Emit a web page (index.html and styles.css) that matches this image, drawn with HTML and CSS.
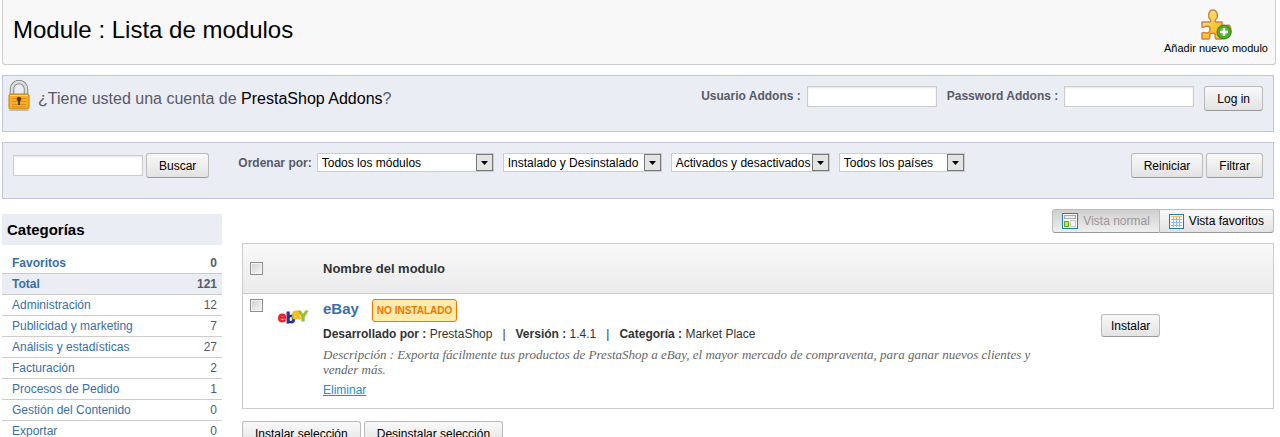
FILE: index.html
```html
<!DOCTYPE html>
<html lang="es">
<head>
    <meta charset="UTF-8">
    <meta name="viewport" content="width=device-width, initial-scale=1.0">
    <title>Module : Lista de modulos</title>
    <link rel="stylesheet" href="styles.css">
</head>
<body>

    <header class="toolbar">
        <h1>Module : Lista de modulos</h1>
        <a class="add-module" href="#">
            <svg width="34" height="32" viewBox="0 0 34 32">
                <defs>
                    <linearGradient id="gold" x1="0" y1="0" x2="1" y2="1">
                        <stop offset="0" stop-color="#fff0a0"/>
                        <stop offset=".5" stop-color="#fcc533"/>
                        <stop offset="1" stop-color="#f5a51c"/>
                    </linearGradient>
                    <radialGradient id="green">
                        <stop offset="0" stop-color="#6dc93f"/>
                        <stop offset="1" stop-color="#42a31c"/>
                    </radialGradient>
                </defs>
                <path d="M3 14h8c2-1 0-3-1-4-1-3 0-8 4-8s5 5 4 8c-1 1-3 3-1 4h6v7c1 2 3-4 6-4s3 4 3 7-3 6-5 4c-2-1-4-2-4 0v3h-6c-2-2 0-3-1-5-1-1-4-1-5 0s1 3-1 5H3v-6c2-1 3 0 5 0s3-2 3-4-1-3-3-3-3 2-5 1z" fill="url(#gold)" stroke="#cf8440" stroke-width="1.5" stroke-linejoin="round"/>
                <circle cx="25" cy="24" r="7" fill="url(#green)" stroke="#2f8416"/>
                <path d="M25 20v8M21 24h8" stroke="#fff" stroke-width="2.5"/>
            </svg>
            <span>Añadir nuevo modulo</span>
        </a>
    </header>

    <!-- Addons login -->
    <form class="panel addons">
        <svg class="lock" width="22" height="32" viewBox="0 0 22 32">
            <path d="M4 15V9a7 7 0 0 1 14 0v6" fill="none" stroke="#85878a" stroke-width="4.5"/>
            <path d="M4 15V9a7 7 0 0 1 14 0v6" fill="none" stroke="#dcdddf" stroke-width="2.5"/>
            <rect x="1" y="14" width="20" height="15" rx="1.5" fill="#f8ae24" stroke="#bd7c14"/>
            <path d="M2.500 15.500h17" stroke="#ffdf80"/>
            <path d="M4 18.500h14M4 21.500h14M4 24.500h14M4 27h14" stroke="#da8d15"/>
            <circle cx="11" cy="19" r="2.300" fill="#5d3709"/>
            <path d="M11 19v6" stroke="#5d3709" stroke-width="2"/>
            <path d="M1 30.500h20" stroke="#b9bac4"/>
        </svg>
        <p class="question">¿Tiene usted una cuenta de <a href="#">PrestaShop Addons</a>?</p>
        <label for="addons-user">Usuario Addons :</label>
        <input class="field" type="text" id="addons-user">
        <label for="addons-pass">Password Addons :</label>
        <input class="field" type="password" id="addons-pass">
        <button class="button" type="button">Log in</button>
    </form>

    <!-- Search and filters -->
    <form class="panel filters">
        <input class="field" type="text" aria-label="Buscar">
        <button class="button" type="button">Buscar</button>
        <div class="sort">
            <label for="sort-type">Ordenar por:</label>
            <select class="sort-type" id="sort-type"><option>Todos los módulos</option></select>
            <select class="sort-state" aria-label="Instalación"><option>Instalado y Desinstalado</option></select>
            <select class="sort-state" aria-label="Activación"><option>Activados y desactivados</option></select>
            <select class="sort-country" aria-label="País"><option>Todos los países</option></select>
        </div>
        <button class="button" type="reset">Reiniciar</button>
        <button class="button" type="button">Filtrar</button>
    </form>

    <div class="content">
        <aside class="sidebar">
            <h2>Categorías</h2>
            <ul class="categories">
                <li class="strong"><a href="#">Favoritos</a><span>0</span></li>
                <li class="strong selected"><a href="#">Total</a><span>121</span></li>
                <li><a href="#">Administración</a><span>12</span></li>
                <li><a href="#">Publicidad y marketing</a><span>7</span></li>
                <li><a href="#">Análisis y estadísticas</a><span>27</span></li>
                <li><a href="#">Facturación</a><span>2</span></li>
                <li><a href="#">Procesos de Pedido</a><span>1</span></li>
                <li><a href="#">Gestión del Contenido</a><span>0</span></li>
                <li><a href="#">Exportar</a><span>0</span></li>
            </ul>
        </aside>

        <main class="modules">
            <div class="views">
                <button class="view" type="button" disabled>
                    <svg width="16" height="16" viewBox="0 0 16 16">
                        <rect x=".5" y=".5" width="15" height="15" fill="#fff" stroke="#1c7cb5"/>
                        <rect x="2.500" y="2.500" width="11" height="3" fill="#eee" stroke="#aaa"/>
                        <rect x="2.500" y="8.500" width="4" height="5" fill="#b9e86c" stroke="#62a813"/>
                        <rect x="8.500" y="7.500" width="5" height="6" fill="#f4f4f4" stroke="#c6c6c6"/>
                    </svg>
                    Vista normal
                </button>
                <button class="view" type="button">
                    <svg width="15" height="15" viewBox="0 0 15 15">
                        <rect x=".5" y=".5" width="14" height="14" fill="#fff" stroke="#1c7cb5"/>
                        <path d="M4.500 2v11M7.500 2v11M10.500 2v11M2 5.500h11M2 8.500h11M2 11.500h11" stroke="#8fbbe4"/>
                        <path d="M2 2.500h11" stroke="#f6c34f"/>
                    </svg>
                    Vista favoritos
                </button>
            </div>

            <table class="module-table">
                <thead>
                    <tr>
                        <th class="check"><input type="checkbox" aria-label="Seleccionar todos"></th>
                        <th class="logo"></th>
                        <th>Nombre del modulo</th>
                        <th class="actions"></th>
                    </tr>
                </thead>
                <tbody>
                    <tr>
                        <td class="check"><input type="checkbox" aria-label="eBay"></td>
                        <td class="logo">
                            <svg width="32" height="32" viewBox="0 0 32 32">
                                <text y="23"><tspan x="0" fill="#e6202c" stroke="#e6202c">e</tspan><tspan x="8" dy="1" fill="#20309a" stroke="#20309a">b</tspan><tspan x="14" dy="-4" fill="#f8b91c" stroke="#f8b91c">a</tspan><tspan x="20" dy="2" fill="#98c21f" stroke="#98c21f">Y</tspan></text>
                            </svg>
                        </td>
                        <td class="details">
                            <div class="title"><h3>eBay</h3><span class="badge">NO INSTALADO</span></div>
                            <p class="meta">
                                <span><b>Desarrollado por :</b> PrestaShop</span>
                                <span>|</span>
                                <span><b>Versión :</b> 1.4.1</span>
                                <span>|</span>
                                <span><b>Categoría :</b> Market Place</span>
                            </p>
                            <p class="description">Descripción : Exporta fácilmente tus productos de PrestaShop a eBay, el mayor mercado de compraventa, para ganar nuevos clientes y vender más.</p>
                            <a class="remove" href="#">Eliminar</a>
                        </td>
                        <td class="actions"><button class="button small" type="button">Instalar</button></td>
                    </tr>
                </tbody>
            </table>

            <div class="bulk">
                <button class="button" type="button">Instalar selección</button>
                <button class="button" type="button">Desinstalar selección</button>
            </div>
        </main>
    </div>

</body>
</html>
```
FILE: styles.css
```css
* {
    box-sizing: border-box;
}

body {
    height: 100vh;
    margin: 0;
    padding: 0 6px 0 2px;
    overflow: hidden;
    background-color: #fff;
    color: #585a69;
    font-family: Arial, "Liberation Sans", sans-serif;
    font-size: 12px;
}

h1, h2, h3, p, ul {
    margin: 0;
    padding: 0;
}

svg {
    display: block;
    flex: none;
}

a {
    text-decoration: none;
}

/* Top bar */
.toolbar {
    display: flex;
    justify-content: space-between;
    height: 65px;
    margin-right: -2px;
    padding: 8px 7px 0 10px;
    background-color: #f8f8f8;
    border: 1px solid #ccc;
    border-top: 0;
    border-radius: 0 0 3px 3px;
}

.toolbar h1 {
    color: #000;
    font-size: 24px;
    font-weight: normal;
    line-height: 44px;
}

.add-module {
    display: flex;
    flex-direction: column;
    align-items: center;
    color: #000;
    font-size: 11px;
    line-height: 16px;
}

/* Panels */
.panel {
    display: flex;
    align-items: flex-start;
    height: 57px;
    margin-top: 10px;
    padding: 10px;
    background-color: #ebedf4;
    border: 1px solid #c2c4d9;
}

.panel label {
    font-weight: bold;
    line-height: 20px;
}

.field {
    width: 130px;
    height: 21px;
    padding: 0 4px;
    background-color: #fff;
    border: 1px solid #ccc;
    box-shadow: inset 0 1px 2px #e4e4e4;
}

.button {
    height: 25px;
    padding: 0 12px;
    background: linear-gradient(#f9f9f9, #e3e3e3);
    border: 1px solid #bbb;
    border-bottom-color: #999;
    border-radius: 3px;
    color: #000;
    font-family: inherit;
    font-size: 12px;
}

.button.small {
    height: 23px;
    padding: 0 9px;
}

.addons {
    padding: 10px 10px 10px 5px;
}

.lock {
    margin-top: -6px;
}

.question {
    flex: 1;
    margin-left: 8px;
    font-size: 16px;
    line-height: 26px;
}

.question a {
    color: #000;
}

.addons .field {
    margin: 0 10px 0 6px;
}

.filters .field {
    margin: 2px 3px 0 0;
}

.sort {
    display: flex;
    flex: 1;
    margin-left: 29px;
}

.sort select {
    height: 19px;
    margin-right: 9px;
    padding: 0 18px 0 4px;
    appearance: none;
    background: #fff url("data:image/svg+xml,%3Csvg xmlns='http://www.w3.org/2000/svg' width='17' height='17'%3E%3Crect x='.5' y='.5' width='16' height='16' fill='%23e4e4e4' stroke='%23777'/%3E%3Cpath d='M5 7h7L8.500 11z'/%3E%3C/svg%3E") no-repeat right center;
    border: 1px solid #ccc;
    border-radius: 0;
    color: #000;
    font-family: inherit;
    font-size: 12px;
}

.sort label {
    margin-right: 5px;
}

.sort .sort-type {
    width: 177px;
}

.sort .sort-state {
    width: 159px;
}

.sort .sort-country {
    width: 126px;
}

.filters .button + .button {
    margin-left: 3px;
}

/* Content */
.content {
    display: flex;
    gap: 20px;
    margin-top: 10px;
}

.sidebar {
    flex: none;
    width: 220px;
    margin-top: 5px;
}

.sidebar h2 {
    padding: 0 5px;
    background-color: #ebedf4;
    color: #000;
    font-size: 15px;
    line-height: 31px;
}

.categories {
    margin-top: 8px;
    list-style: none;
}

.categories li {
    display: flex;
    justify-content: space-between;
    padding: 0 5px 0 10px;
    border-bottom: 1px solid #ccc;
    line-height: 20px;
}

.categories a {
    color: #3a6ea9;
}

.categories .strong {
    font-weight: bold;
}

.categories .selected {
    background-color: #ebedf4;
}

.modules {
    flex: 1;
}

.views {
    display: flex;
    justify-content: flex-end;
}

.view {
    display: flex;
    align-items: center;
    gap: 5px;
    height: 24px;
    padding: 0 9px;
    background: linear-gradient(#f9f9f9, #e3e3e3);
    border: 1px solid #bbb;
    border-bottom-color: #999;
    border-left: 0;
    border-radius: 0 3px 3px 0;
    color: #000;
    font-family: inherit;
    font-size: 12px;
}

.view:disabled {
    background: linear-gradient(#cfcfcf, #eee);
    border-left: 1px solid #bbb;
    border-radius: 3px 0 0 3px;
    color: #999;
}

/* Module list */
.module-table {
    width: 100%;
    margin-top: 10px;
    border: 1px solid #ccc;
    border-spacing: 0;
}

.module-table th {
    height: 50px;
    padding: 0;
    background: linear-gradient(#f9f9f9, #ebebeb);
    border-bottom: 1px solid #ccc;
    color: #333;
    font-size: 13px;
    text-align: left;
}

.module-table td {
    padding: 5px 0 9px;
    vertical-align: top;
}

.module-table .check {
    width: 35px;
    padding-left: 7px;
}

.check input {
    display: block;
    width: 13px;
    height: 13px;
    margin: 0;
    appearance: none;
    background: linear-gradient(135deg, #ccd0d5, #f8f8f8);
    border: 1px solid #8e8f8f;
    box-shadow: inset 0 0 0 1px #f4f4f4;
}

.module-table .logo {
    width: 45px;
}

.logo text {
    font-family: Arial, "Liberation Sans", sans-serif;
    font-size: 15px;
    font-weight: bold;
}

.module-table .details {
    padding-right: 40px;
}

.title {
    display: flex;
    gap: 13px;
}

.title h3 {
    color: #3a6ea9;
    font-size: 15px;
    line-height: 20px;
}

.badge {
    padding: 0 4px;
    background-color: #ffeba9;
    border: 1px solid #ee7600;
    border-radius: 3px;
    color: #ee7600;
    font-size: 10px;
    font-weight: bold;
    line-height: 21px;
}

.meta {
    display: flex;
    gap: 10px;
    margin-top: 3px;
    color: #333;
    line-height: 18px;
}

.description {
    margin-top: 4px;
    color: #666;
    font-family: Georgia, "Liberation Serif", serif;
    font-size: 13px;
    font-style: italic;
    line-height: 15px;
}

.remove {
    display: block;
    margin-top: 4px;
    color: #268ccd;
    line-height: 18px;
    text-decoration: underline;
}

.module-table .actions {
    width: 172px;
}

.module-table td.actions {
    padding-top: 20px;
}

.bulk {
    display: flex;
    gap: 3px;
    margin-top: 12px;
}
```
